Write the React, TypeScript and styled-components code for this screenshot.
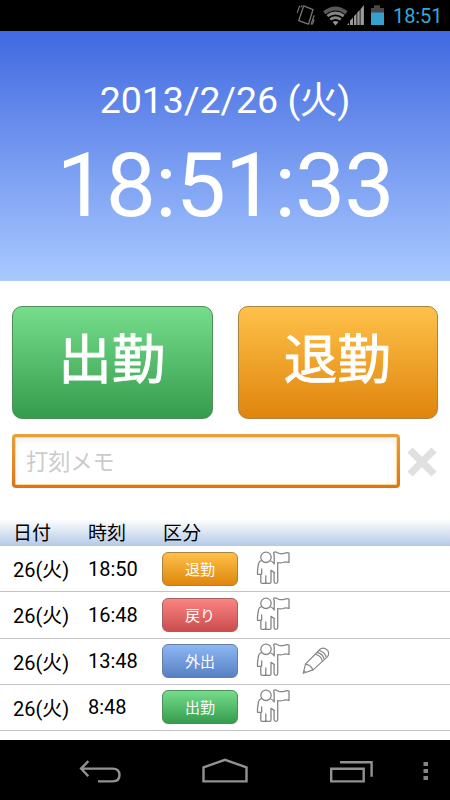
import React from 'react';
import styled, { createGlobalStyle } from 'styled-components';

const GlobalStyle = createGlobalStyle`
  * { box-sizing: border-box; }
  html, body { margin: 0; padding: 0; background: #fff; }
  body { font-family: Roboto, "Noto Sans CJK JP", sans-serif; }
`;

const Screen = styled.div`
  width: 450px;
  height: 800px;
  display: flex;
  flex-direction: column;
  overflow: hidden;
  background: #fff;
  color: #000;
`;

const StatusBar = styled.header`
  height: 31px;
  flex: none;
  display: flex;
  align-items: center;
  justify-content: flex-end;
  background: #000;
  padding-right: 9px;
`;

const StatusTime = styled.span`
  width: 48px;
  margin-left: 8px;
  padding-top: 2px;
  font-size: 20px;
  line-height: 29px;
  letter-spacing: -0.1px;
  color: #35a8d6;
  white-space: nowrap;
`;

const ClockPanel = styled.section`
  height: 250px;
  flex: none;
  display: flex;
  flex-direction: column;
  align-items: center;
  padding-top: 46px;
  color: #fff;
  background: linear-gradient(#4169e1, #a9c9ff);
`;

const DateText = styled.div`
  height: 46px;
  line-height: 46px;
  font-size: 37.5px;
  white-space: nowrap;
`;

const DayMark = styled.span`
  font-size: 38px;
  margin: 0 -0.5px;
`;

const ClockText = styled.div`
  height: 104px;
  margin-top: 11px;
  line-height: 104px;
  font-size: 89.5px;
  letter-spacing: -1px;
  white-space: nowrap;
`;

const Actions = styled.section`
  display: flex;
  flex: none;
  gap: 25px;
  padding: 25px 12px 0;
`;

type Tone = 'green' | 'orange' | 'red' | 'blue';

const tones: Record<Tone, { fill: string; edge: string }> = {
  green: { fill: 'linear-gradient(#77de8d, #349b4c)', edge: '#4d8e5b' },
  orange: { fill: 'linear-gradient(#ffc24b, #df840c)', edge: '#a98343' },
  red: { fill: 'linear-gradient(#fb8785, #ca4b4b)', edge: '#a26262' },
  blue: { fill: 'linear-gradient(#8fb8f6, #557fc1)', edge: '#6980a5' },
};

const PunchButton = styled.button<{ $tone: Tone }>`
  width: 201px;
  height: 113px;
  padding: 0 1px 13px 0;
  border: 1px solid ${p => tones[p.$tone].edge};
  border-radius: 10px;
  background: ${p => tones[p.$tone].fill};
  background-origin: border-box;
  color: #fff;
  font: 400 53.5px/1 "Noto Sans CJK JP", sans-serif;
  -webkit-text-stroke: 0.9px #fff;
  white-space: nowrap;
`;

const MemoRow = styled.section`
  display: flex;
  flex: none;
  align-items: center;
  gap: 6px;
  height: 54px;
  margin: 15px 0 0 12px;
`;

const MemoFrame = styled.div`
  width: 388px;
  height: 54px;
  padding: 3px;
  border-radius: 4px;
  background: linear-gradient(#e7a03c, #dc7418);
`;

const MemoInput = styled.input`
  display: block;
  width: 100%;
  height: 100%;
  padding: 0 10px 3px;
  border: 1px solid #ffd995;
  border-radius: 1px;
  outline: none;
  background: #fff;
  box-shadow: inset 0 3px 6px rgba(0, 0, 0, 0.06);
  font: 400 22.2px/1 "Noto Sans CJK JP", sans-serif;
  &::placeholder { color: #cbcbcb; opacity: 1; }
`;

const LogHeader = styled.div`
  display: grid;
  grid-template-columns: 75px 75px 1fr;
  flex: none;
  height: 27px;
  margin-top: 31px;
  padding-left: 13px;
  background: linear-gradient(#fff, #b5c9e5);
  font: 400 19px/25px "Noto Sans CJK JP", sans-serif;
`;

const LogRow = styled.div`
  display: grid;
  grid-template-columns: 75px 74px 92.5px 46px 1fr;
  align-items: center;
  flex: none;
  height: 46.25px;
  padding-left: 13px;
  border-bottom: 1px solid #c3c3c3;
  font-size: 20px;
  white-space: nowrap;
`;

const Tag = styled.span<{ $tone: Tone }>`
  width: 76px;
  height: 34px;
  border: 1px solid ${p => tones[p.$tone].edge};
  border-radius: 6px;
  background: ${p => tones[p.$tone].fill};
  background-origin: border-box;
  color: #fff;
  font: 400 15px/31px "Noto Sans CJK JP", sans-serif;
  text-align: center;
`;

const NavBar = styled.nav`
  height: 60px;
  flex: none;
  margin-top: auto;
  display: flex;
  align-items: center;
  background: #000;
  svg { display: block; }
`;

const StatusIcons = () => (
  <svg width="90" height="31" viewBox="295 0 90 31">
    <g fill="none" stroke="#777" strokeWidth="1.3">
      <path d="M303.7 5.8l9.3 3.8-4.6 14.6-9.7-3.5z" strokeLinejoin="round" />
      <path d="M299.7 5.8l-2.5 7M302 5.3l-1 2M314.2 15.3l-3.3 9.5M312.4 24.5l1.8-5" strokeWidth="1.1" />
    </g>
    <g fill="none" stroke="#858585">
      <path d="M324.3 12.7q11-8.5 22.2 0" stroke="#585858" strokeWidth="3.8" />
      <path d="M327.3 16q8-6 16.5 0" strokeWidth="2.8" />
      <path d="M330.2 19.6q5.2-4 10.7 0" strokeWidth="2.5" />
    </g>
    <path d="M332.5 22q3-2 6 0l-3 3.5z" fill="#929292" />
    <path d="M347 25l2-2.2V25zM350 25v-4.3l3-3.3V25zM354 25v-8.7l2.5-2.7V25zM357.3 25V12.6l2.4-2.6v15zM360.5 25V9.2l3.4-4.2v20z" fill="#9b9b9b" />
    <path d="M371 13V8h3V5.3h6V8h4v5z" fill="#484848" />
    <path d="M371 12.5h13V25h-13z" fill="#35a1cc" />
  </svg>
);

const ClearIcon = () => (
  <svg width="32" height="34" viewBox="0 0 32 34">
    <path d="M4 6L28 30M28 6L4 30" fill="none" stroke="#e0e0e0" strokeWidth="7.4" />
  </svg>
);

const FlagPersonIcon = () => (
  <svg width="36" height="36" viewBox="254 551 36 36">
    <g fill="none" stroke="#858585" strokeWidth="1.3" strokeLinejoin="round" strokeLinecap="round">
      <circle cx="265" cy="557.3" r="5.2" />
      <path d="M260.3 560.7q-2.2.4-2.8 3.2l-1 6.8v3.6h3.3v7.6q0 1.4 1.4 1.4h2.2q1.4 0 1.4-1.4v-6M264.8 576.5v5.4q0 1.4 1.4 1.4h2.4q1.4 0 1.4-1.4v-11.6l3.4 2.3M260.7 569v5M269.9 561q2 .6 3.3 3v-9.4q-.8-1-.4-2.1 1.5-1.3 3.1 0l2.2.8q3 .8 5.7-.2 2-.8 4.2 0v9.3q-3.1-1.2-6 .1-2.6.8-5.3 0v19.3q0 1.5-1.8 1.5t-1.8-1.5v-9.5" />
    </g>
  </svg>
);

const PencilIcon = () => (
  <svg width="30" height="36" viewBox="301 642 30 36">
    <g fill="none" stroke="#858585" strokeWidth="1.15" strokeLinejoin="round">
      <path d="M303.2 672.3l2.3-9.2 14.3-14.6q2.5-2.6 6.1-.5 3.5 2 2.5 6l-.8 1.6-14.5 13.3z" />
      <path d="M305.5 663.1q4.6.2 7.6 5.8M303.8 669.6l2.2 2M315.2 653.2q6 1.4 7.2 6.9M317 651.4q6 1.4 7.2 6.9M319 649.5q6 1.4 7.2 6.9" />
    </g>
  </svg>
);

const NavIcons = () => (
  <svg width="450" height="60" viewBox="0 740 450 60">
    <g fill="none" stroke="#929292" strokeWidth="2.4">
      <path d="M81.5 768.6h31.2q6.8 0 6.8 6.4 0 6.4-6.8 6.4H98M88.3 761.2l-7.2 7.4 7.2 7.7" />
      <path d="M203.5 781.4v-14l21.5-7.6 21.5 7.6v14z" />
      <path d="M331.2 768.7h32.5v12.7h-32.5zM340 762.3h31.6v14.5" />
    </g>
    <path d="M423.5 762h4.5v4h-4.5zM423.5 769h4.5v4h-4.5zM423.5 776h4.5v4h-4.5z" fill="#858585" />
  </svg>
);

const entries: { time: string; kind: string; tone: Tone; memo?: boolean }[] = [
  { time: '18:50', kind: '退勤', tone: 'orange' },
  { time: '16:48', kind: '戻り', tone: 'red' },
  { time: '13:48', kind: '外出', tone: 'blue', memo: true },
  { time: '8:48', kind: '出勤', tone: 'green' },
];

export default function App() {
  return (
    <Screen lang="ja">
      <GlobalStyle />
      <StatusBar>
        <StatusIcons />
        <StatusTime>18:51</StatusTime>
      </StatusBar>
      <ClockPanel>
        <DateText>2013/2/26 (<DayMark>火</DayMark>)</DateText>
        <ClockText>18:51:33</ClockText>
      </ClockPanel>
      <Actions>
        <PunchButton $tone="green">出勤</PunchButton>
        <PunchButton $tone="orange">退勤</PunchButton>
      </Actions>
      <MemoRow>
        <MemoFrame><MemoInput placeholder="打刻メモ" /></MemoFrame>
        <ClearIcon />
      </MemoRow>
      <LogHeader>
        <span>日付</span><span>時刻</span><span>区分</span>
      </LogHeader>
      {entries.map(e => (
        <LogRow key={e.time}>
          <span>26(火)</span>
          <span>{e.time}</span>
          <Tag $tone={e.tone}>{e.kind}</Tag>
          <FlagPersonIcon />
          {e.memo && <PencilIcon />}
        </LogRow>
      ))}
      <NavBar><NavIcons /></NavBar>
    </Screen>
  );
}
